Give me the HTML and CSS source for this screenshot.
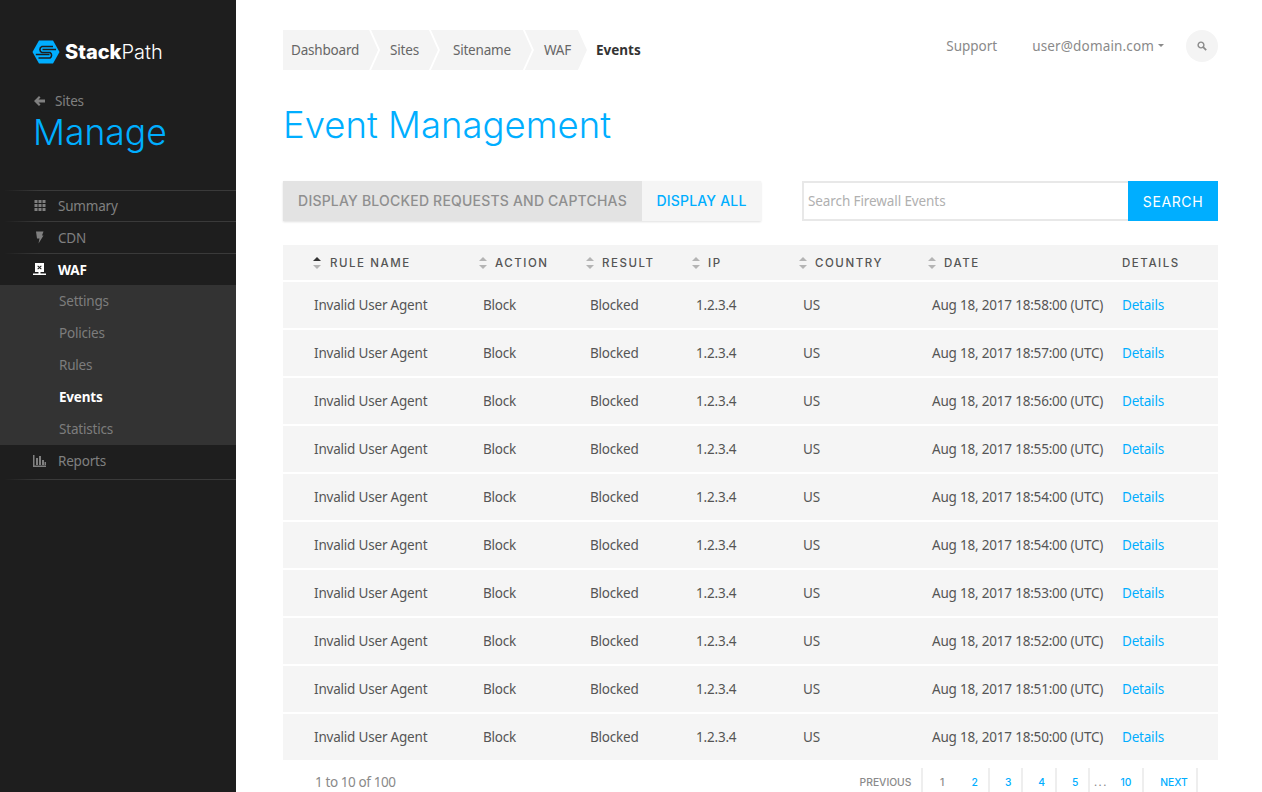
FILE: index.html
```html
<!DOCTYPE html>
<html>
<head>
    <title>Event Management</title>
    <link rel="stylesheet" href="styles.css">
</head>
<body>
    <svg class="defs" width="0" height="0">
        <symbol id="sort" viewBox="0 0 10 14">
            <path d="M5 1 L9 5 H1 Z"/>
            <path d="M1 9 H9 L5 13 Z"/>
        </symbol>
    </svg>
    <div class="sidebar">
        <div class="logo">
            <svg width="28" height="24" viewBox="0 0 28 24">
                <path class="hex" d="M7 0.500 H21 L27.500 12 L21 23.500 H7 L0.500 12 Z"/>
                <path class="hex-line" d="M21 6.500 H10 A3.200 3.200 0 0 0 10 12.500 H18 A3.200 3.200 0 0 1 18 18 H6.500"/>
                <path class="hex-line" d="M24 9.500 H10.500 M3.800 14.500 H17.500"/>
            </svg>
            <span class="logo-text"><b>Stack</b>Path</span>
        </div>
        <a class="back">
            <svg width="11" height="10" viewBox="0 0 11 10"><path d="M5 0 L6.500 1.500 L4.500 3.500 H11 V6.500 H4.500 L6.500 8.500 L5 10 L0 5 Z"/></svg>
            <span>Sites</span>
        </a>
        <div class="section-title">Manage</div>
        <ul class="nav">
            <li class="nav-item first-item">
                <svg width="12" height="11" viewBox="0 0 12 11"><path d="M1 0h3v3H1zM5 0h3v3H5zM9 0h3v3H9zM1 4h3v3H1zM5 4h3v3H5zM9 4h3v3H9zM1 8h3v3H1zM5 8h3v3H5zM9 8h3v3H9z"/></svg>
                Summary
            </li>
            <li class="nav-item">
                <svg width="13" height="13" viewBox="0 0 13 13"><path d="M3 0.500 H10.500 L9 4.500 H10.500 L5.500 12.500 L6.500 7.500 H4 Z"/></svg>
                CDN
            </li>
            <li class="nav-item active">
                <svg width="13" height="13" viewBox="0 0 13 13"><path fill-rule="evenodd" d="M2 0 H11 V9 H7.500 V10.500 H13 V12 H0 V10.500 H5.500 V9 H2 Z M5 2.500 L4.300 3.200 L5.800 4.500 L4.300 5.800 L5 6.500 L6.500 5.200 L8 6.500 L8.700 5.800 L7.200 4.500 L8.700 3.200 L8 2.500 L6.500 3.800 Z"/></svg>
                WAF
            </li>
            <li class="subnav">
                <a>Settings</a>
                <a>Policies</a>
                <a>Rules</a>
                <a class="current">Events</a>
                <a>Statistics</a>
            </li>
            <li class="nav-item last">
                <svg width="13" height="12" viewBox="0 0 13 12"><path d="M0 0h1.500v10.500H13V12H0zM3 3h2v7H3zM6 1h2v9H6zM9 5h2v5H9zM11.500 7H13v3h-1.500z"/></svg>
                Reports
            </li>
        </ul>
    </div>
    <div class="main">
        <div class="topbar">
            <div class="crumbs">
                <a class="crumb first">Dashboard</a>
                <a class="crumb">Sites</a>
                <a class="crumb crumb-site">Sitename</a>
                <a class="crumb crumb-waf">WAF</a>
                <span class="crumb-current">Events</span>
            </div>
            <div class="usernav">
                <a class="support">Support</a>
                <a class="user">user@domain.com<i class="caret"></i></a>
                <span class="search-round">
                    <svg width="10" height="10" viewBox="0 0 10 10"><circle cx="4" cy="4" r="2.900" fill="none" stroke="#8a8a8a" stroke-width="1.400"/><path d="M6.200 6.200 L9.200 9.200" stroke="#8a8a8a" stroke-width="1.800"/></svg>
                </span>
            </div>
        </div>
        <h1>Event Management</h1>
        <div class="toolbar">
            <div class="toggle">
                <a class="toggle-on">DISPLAY BLOCKED REQUESTS AND CAPTCHAS</a>
                <a class="toggle-off">DISPLAY ALL</a>
            </div>
            <div class="search">
                <input type="text" placeholder="Search Firewall Events">
                <button>SEARCH</button>
            </div>
        </div>
        <table>
            <colgroup>
                <col class="c-name"><col class="c-action"><col class="c-result"><col class="c-ip"><col class="c-country"><col class="c-date"><col class="c-details">
            </colgroup>
            <thead>
                <tr>
                    <th><svg class="sort" viewBox="0 0 10 14"><path class="sorted" d="M5 1 L9 5 H1 Z"/><path d="M1 9 H9 L5 13 Z"/></svg>RULE NAME</th>
                    <th><svg class="sort"><use href="#sort"/></svg>ACTION</th>
                    <th><svg class="sort"><use href="#sort"/></svg>RESULT</th>
                    <th><svg class="sort"><use href="#sort"/></svg>IP</th>
                    <th><svg class="sort"><use href="#sort"/></svg>COUNTRY</th>
                    <th><svg class="sort"><use href="#sort"/></svg>DATE</th>
                    <th>DETAILS</th>
                </tr>
            </thead>
            <tbody>
                <tr><td>Invalid User Agent</td><td>Block</td><td>Blocked</td><td>1.2.3.4</td><td>US</td><td>Aug 18, 2017 18:58:00 (UTC)</td><td><a>Details</a></td></tr>
                <tr><td>Invalid User Agent</td><td>Block</td><td>Blocked</td><td>1.2.3.4</td><td>US</td><td>Aug 18, 2017 18:57:00 (UTC)</td><td><a>Details</a></td></tr>
                <tr><td>Invalid User Agent</td><td>Block</td><td>Blocked</td><td>1.2.3.4</td><td>US</td><td>Aug 18, 2017 18:56:00 (UTC)</td><td><a>Details</a></td></tr>
                <tr><td>Invalid User Agent</td><td>Block</td><td>Blocked</td><td>1.2.3.4</td><td>US</td><td>Aug 18, 2017 18:55:00 (UTC)</td><td><a>Details</a></td></tr>
                <tr><td>Invalid User Agent</td><td>Block</td><td>Blocked</td><td>1.2.3.4</td><td>US</td><td>Aug 18, 2017 18:54:00 (UTC)</td><td><a>Details</a></td></tr>
                <tr><td>Invalid User Agent</td><td>Block</td><td>Blocked</td><td>1.2.3.4</td><td>US</td><td>Aug 18, 2017 18:54:00 (UTC)</td><td><a>Details</a></td></tr>
                <tr><td>Invalid User Agent</td><td>Block</td><td>Blocked</td><td>1.2.3.4</td><td>US</td><td>Aug 18, 2017 18:53:00 (UTC)</td><td><a>Details</a></td></tr>
                <tr><td>Invalid User Agent</td><td>Block</td><td>Blocked</td><td>1.2.3.4</td><td>US</td><td>Aug 18, 2017 18:52:00 (UTC)</td><td><a>Details</a></td></tr>
                <tr><td>Invalid User Agent</td><td>Block</td><td>Blocked</td><td>1.2.3.4</td><td>US</td><td>Aug 18, 2017 18:51:00 (UTC)</td><td><a>Details</a></td></tr>
                <tr><td>Invalid User Agent</td><td>Block</td><td>Blocked</td><td>1.2.3.4</td><td>US</td><td>Aug 18, 2017 18:50:00 (UTC)</td><td><a>Details</a></td></tr>
            </tbody>
        </table>
        <div class="footer">
            <span class="count">1 to 10 of 100</span>
            <div class="pager">
                <a class="prev">PREVIOUS</a>
                <a class="page current-page">1</a>
                <a class="page">2</a>
                <a class="page">3</a>
                <a class="page">4</a>
                <a class="page">5</a>
                <a class="page ten"><span class="dots">...</span>10</a>
                <a class="next">NEXT</a>
            </div>
        </div>
    </div>
</body>
</html>
```

FILE: styles.css
```css
* {
    box-sizing: border-box;
}
html, body {
    height: 100%;
}
body {
    margin: 0;
    display: flex;
    height: 792px;
    overflow: hidden;
    font-family: "Noto Sans", sans-serif;
    font-size: 13.500px;
    letter-spacing: -0.2px;
    color: #555555;
    background-color: #ffffff;
}
.defs {
    display: none;
}
a {
    text-decoration: none;
}

/* sidebar */
.sidebar {
    width: 236px;
    flex-shrink: 0;
    background-color: #1e1e1e;
    padding-top: 40px;
}
.logo {
    display: flex;
    align-items: center;
    gap: 5px;
    padding-left: 32px;
    height: 24px;
}
.hex {
    fill: #00aeff;
}
.hex-line {
    fill: none;
    stroke: #1e1e1e;
    stroke-width: 1.600;
}
.logo-text {
    font-family: Inter, sans-serif;
    font-size: 20px;
    font-weight: 300;
    letter-spacing: 0;
    color: #ffffff;
}
.logo-text b {
    font-weight: 800;
}
.back {
    display: flex;
    align-items: center;
    gap: 10px;
    margin: 27px 0 0 34px;
    height: 20px;
    color: #808080;
    fill: #808080;
}
.section-title {
    margin: 1px 0 0 33px;
    font-family: Inter, sans-serif;
    font-size: 35.500px;
    font-weight: 300;
    letter-spacing: 0;
    line-height: 42px;
    color: #00aeff;
}
.nav {
    list-style: none;
    margin: 36px 0 0 0;
    padding: 0;
}
.nav-item {
    display: flex;
    align-items: center;
    height: 32px;
    padding-left: 33px;
    gap: 12px;
    color: #808080;
    fill: #808080;
    border-top: 1px solid;
    border-image: linear-gradient(to right, #1e1e1e 5px, #3a3a3a 40px) 1;
}
.first-item {
    height: 31px;
    padding-bottom: 1px;
}
.nav-item svg {
    width: 13px;
    flex-shrink: 0;
}
.nav-item.active {
    color: #ffffff;
    fill: #ffffff;
    font-weight: 700;
}
.nav-item.last {
    height: 35px;
    padding-bottom: 3px;
    border-top: none;
    border-bottom: 1px solid;
}
.subnav {
    background-color: #333333;
    display: flex;
    flex-direction: column;
}
.subnav a {
    height: 32px;
    line-height: 32px;
    padding-left: 59px;
    color: #7d7d7d;
}
.subnav a.current {
    color: #ffffff;
    font-weight: 700;
}

/* top of the page */
.main {
    flex: 1;
    padding: 30px 44px 0 47px;
}
.topbar {
    display: flex;
    justify-content: space-between;
    height: 40px;
}
.crumbs {
    display: flex;
    align-items: center;
    height: 40px;
}
.crumb {
    height: 40px;
    line-height: 40px;
    padding: 0 19px 0 19px;
    margin-right: -7px;
    background-color: #f4f4f4;
    color: #666666;
    clip-path: polygon(0 0, calc(100% - 9px) 0, 100% 50%, calc(100% - 9px) 100%, 0 100%, 9px 50%);
}
.crumb.first {
    padding-left: 8px;
    clip-path: polygon(0 0, calc(100% - 9px) 0, 100% 50%, calc(100% - 9px) 100%, 0 100%);
}
.crumb-site {
    padding: 0 21px 0 22px;
}
.crumb-waf {
    padding: 0 16px 0 19px;
}
.crumb-current {
    margin-left: 16px;
    padding-bottom: 1px;
    font-weight: 700;
    letter-spacing: 0;
    color: #333333;
}
.usernav {
    display: flex;
    align-items: center;
    height: 32px;
    color: #8a8a8a;
}
.support {
    margin-right: 35px;
    padding-bottom: 1px;
    letter-spacing: 0;
}
.user {
    display: flex;
    align-items: center;
    margin-right: 22px;
    padding-bottom: 1px;
    letter-spacing: 0.15px;
}
.caret {
    margin-left: 4px;
    border-left: 3.500px solid transparent;
    border-right: 3.500px solid transparent;
    border-top: 3.500px solid #8a8a8a;
}
.search-round {
    display: flex;
    align-items: center;
    justify-content: center;
    width: 32px;
    height: 32px;
    border-radius: 50%;
    background-color: #f4f4f4;
}
h1 {
    margin: 33px 0 0 0;
    font-family: Inter, sans-serif;
    font-size: 36.500px;
    font-weight: 300;
    letter-spacing: 0;
    line-height: 44px;
    color: #00aeff;
}

/* buttons and search */
.toolbar {
    display: flex;
    justify-content: space-between;
    margin-top: 34px;
    height: 40px;
}
.toggle {
    display: flex;
    width: 478px;
    box-shadow: 0 1px 2px rgba(0, 0, 0, 0.12);
    font-family: Inter, sans-serif;
    font-size: 14px;
    font-weight: 500;
    letter-spacing: 0.2px;
    line-height: 40px;
}
.toggle a {
    text-align: center;
}
.toggle-on {
    width: 359px;
    background-color: #e3e3e3;
    color: #8f8f8f;
}
.toggle-off {
    flex: 1;
    background-color: #f5f5f5;
    color: #00aeff;
}
.search {
    display: flex;
    width: 416px;
}
.search input {
    width: 326px;
    height: 40px;
    padding: 0 4px 1px 4px;
    border: 2px solid #e8e8e8;
    border-right: none;
    font-family: "Noto Sans", sans-serif;
    font-size: 13.500px;
    letter-spacing: -0.1px;
    outline: none;
}
.search input::placeholder {
    color: #b0b0b0;
}
.search button {
    flex: 1;
    border: none;
    background-color: #00aeff;
    color: #ffffff;
    font-family: Inter, sans-serif;
    font-size: 14px;
    font-weight: 400;
    letter-spacing: 0.6px;
}

/* table */
table {
    width: 935px;
    margin-top: 24px;
    table-layout: fixed;
    border-collapse: separate;
    border-spacing: 0;
}
.c-name { width: 200px; }
.c-action { width: 107px; }
.c-result { width: 106px; }
.c-ip { width: 107px; }
.c-country { width: 129px; }
.c-date { width: 190px; }
.c-details { width: 96px; }
th {
    height: 37px;
    padding: 0;
    background-color: #f4f4f4;
    font-family: Inter, sans-serif;
    font-size: 11.500px;
    font-weight: 500;
    letter-spacing: 1.550px;
    text-align: left;
    color: #555555;
    border-bottom: 2px solid #ffffff;
}
th:first-child {
    padding-left: 29px;
}
td:first-child {
    padding-left: 31px;
}
.sort {
    width: 10px;
    height: 14px;
    margin: 0 7px 0 -5px;
    vertical-align: -3px;
    fill: #b4b4b4;
}
th:first-child .sort {
    margin-left: 0;
    margin-right: 8px;
}
.sorted {
    fill: #333333;
}
td {
    height: 48px;
    padding: 0 0 1px 0;
    background-color: #f5f5f5;
    border-bottom: 2px solid #ffffff;
    white-space: nowrap;
}
td a {
    color: #00aeff;
}

/* footer */
.footer {
    display: flex;
    justify-content: space-between;
    margin-top: 6px;
    height: 24px;
}
.count {
    margin-left: 32px;
    line-height: 28px;
    letter-spacing: -0.4px;
    color: #8a8a8a;
}
.pager {
    display: flex;
    margin-right: 20px;
    font-family: Inter, sans-serif;
    font-size: 10.300px;
    font-weight: 500;
    letter-spacing: 0;
    color: #00aeff;
    line-height: 28px;
    height: 24px;
}
.pager a {
    border-right: 2px solid #eeeeee;
    text-align: center;
}
.prev {
    width: 63px;
    padding-right: 9px;
    color: #8a8a8a;
}
.page {
    width: 33.500px;
    padding-left: 6px;
}
.current-page {
    color: #8a8a8a;
    border-right: none !important;
}
.ten {
    position: relative;
    width: 54px;
    padding-left: 20px;
}
.dots {
    position: absolute;
    left: 4px;
    letter-spacing: 1.500px;
    color: #8a8a8a;
}
.next {
    width: 54px;
    padding-left: 8px;
}
```
